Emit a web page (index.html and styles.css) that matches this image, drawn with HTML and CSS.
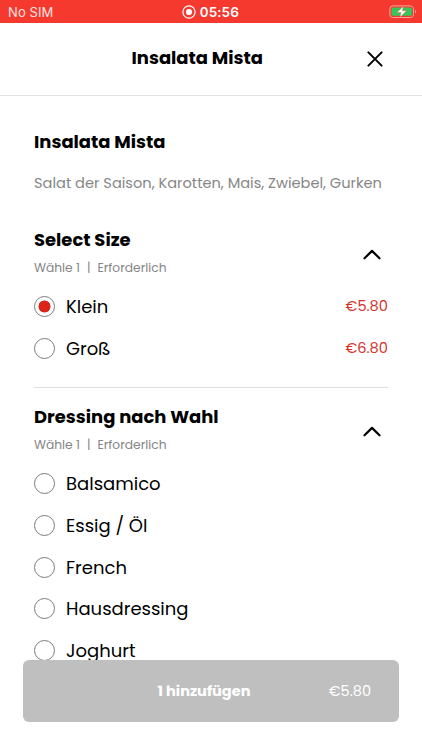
FILE: index.html
```html
<!DOCTYPE html>
<html lang="de">
<head>
<meta charset="utf-8">
<meta name="viewport" content="width=device-width, initial-scale=1">
<title>Insalata Mista</title>
<link rel="stylesheet" href="styles.css">
</head>
<body>
<div class="screen">
  <div class="status">
    <span class="carrier">No SIM</span>
    <span class="clock">
      <svg width="14" height="14" viewBox="0 0 14 14"><circle cx="7" cy="7" r="6.1" fill="none" stroke="#fff" stroke-width="1.2"/><circle cx="7" cy="7" r="3.1" fill="#fff"/></svg>
      <span class="time">05:56</span>
    </span>
    <svg class="battery" width="28" height="14" viewBox="0 0 28 14">
      <rect x=".9" y=".9" width="23.6" height="11.6" rx="3" fill="none" stroke="#fba29b" stroke-width="1"/>
      <rect x="2.6" y="2.6" width="20.2" height="8.2" rx="1.6" fill="#34c759"/>
      <path d="M26 4.8c1.6.6 1.6 3.2 0 3.8z" fill="#fba29b"/>
      <path d="M14.6 1 7.9 7.6h4.1l-1.3 4.9 6.9-6.8h-4.2z" fill="#fff" stroke="#f6392f" stroke-width=".4"/>
    </svg>
  </div>
  <header class="header">
    <h1 class="title header-title">Insalata Mista</h1>
    <svg class="close" width="16" height="16" viewBox="0 0 16 16"><path d="M1.4 1.4 14.6 14.6M14.6 1.4 1.4 14.6" fill="none" stroke="#000" stroke-width="2" stroke-linecap="round"/></svg>
  </header>
  <main class="content">
    <h2 class="title">Insalata Mista</h2>
    <p class="description">Salat der Saison, Karotten, Mais, Zwiebel, Gurken</p>
    <section class="group">
      <div class="group-head">
        <div>
          <h3 class="title">Select Size</h3>
          <p class="hint"><span>Wähle 1</span><span>|</span><span>Erforderlich</span></p>
        </div>
        <svg class="chevron" width="18" height="11" viewBox="0 0 18 11"><path d="M1.5 9.3 9 1.9l7.5 7.4" fill="none" stroke="#000" stroke-width="2.2" stroke-linecap="round" stroke-linejoin="round"/></svg>
      </div>
      <div class="option"><i class="radio checked"></i><span class="name">Klein</span><span class="price">€5.80</span></div>
      <div class="option"><i class="radio"></i><span class="name">Groß</span><span class="price">€6.80</span></div>
    </section>
    <section class="group">
      <div class="group-head">
        <div>
          <h3 class="title">Dressing nach Wahl</h3>
          <p class="hint"><span>Wähle 1</span><span>|</span><span>Erforderlich</span></p>
        </div>
        <svg class="chevron" width="18" height="11" viewBox="0 0 18 11"><path d="M1.5 9.3 9 1.9l7.5 7.4" fill="none" stroke="#000" stroke-width="2.2" stroke-linecap="round" stroke-linejoin="round"/></svg>
      </div>
      <div class="option"><i class="radio"></i><span class="name">Balsamico</span></div>
      <div class="option"><i class="radio"></i><span class="name">Essig / Öl</span></div>
      <div class="option"><i class="radio"></i><span class="name">French</span></div>
      <div class="option"><i class="radio"></i><span class="name">Hausdressing</span></div>
      <div class="option"><i class="radio"></i><span class="name">Joghurt</span></div>
    </section>
  </main>
  <div class="add-bar"><span></span><strong class="add-label">1 hinzufügen</strong><span class="add-price">€5.80</span></div>
</div>
</body>
</html>
```
FILE: styles.css
```css
* { box-sizing: border-box; }
body { margin: 0; background: #fff; }
h1, h2, h3, p { margin: 0; }
svg { display: block; flex: none; }

.screen {
  position: relative;
  height: 750px;
  overflow: hidden;
  font-family: Poppins, Inter, "Open Sans", sans-serif;
  color: #000;
  white-space: nowrap;
}

.status {
  display: grid;
  grid-template-columns: 1fr auto 1fr;
  align-items: center;
  height: 23px;
  padding: 1px 5px 0 8px;
  background: #f6392f;
  color: #fff;
  font-family: Inter, "Liberation Sans", sans-serif;
}
.carrier { font-size: 13px; color: #ffe3e0; letter-spacing: 0.1px; }
.clock { display: flex; align-items: center; gap: 4px; margin-right: 4px; }
.time { font-size: 13.5px; font-weight: 600; letter-spacing: 0.2px; font-feature-settings: "tnum" 1; }
.battery { justify-self: end; }

.header {
  display: grid;
  grid-template-columns: 1fr 104px 1fr;
  align-items: center;
  height: 73px;
  padding: 0 39px 3px 12px;
  border-bottom: 1px solid #e2e2e2;
}
.title { font-size: 17.95px; line-height: 26px; font-weight: 700; }
.header-title { grid-column: 2; margin: 0 -14px; }
.close { justify-self: end; margin-top: 3px; }

.content { padding: 33px 34px 0; }
.description { margin-top: 16px; font-size: 14.6px; line-height: 24px; color: #868686; }

.group { padding-top: 31.5px; }
.group + .group { margin-top: 17.6px; border-top: 1px solid #dedede; padding-top: 16px; }
.group-head { display: flex; justify-content: space-between; align-items: center; padding-right: 7px; margin-bottom: 8.4px; height: 51px; }
.hint { display: flex; gap: 7px; margin-top: 5px; font-size: 12.25px; line-height: 20px; color: #858585; }
.chevron { margin-top: 4px; }

.option { display: flex; align-items: center; height: 41.6px; }
.radio { flex: none; width: 21px; height: 21px; border: 1px solid #7c7c7c; border-radius: 50%; }
.checked { background: radial-gradient(circle, #dc241b 5.7px, transparent 6.3px); }
.name { margin-left: 11px; font-size: 18px; }
.price { margin-left: auto; font-size: 14.6px; color: #d5322b; }

.add-bar {
  position: absolute;
  left: 23px;
  right: 23px;
  top: 660px;
  display: grid;
  grid-template-columns: 1fr auto 1fr;
  align-items: center;
  height: 61.5px;
  padding: 1px 28px 0 14px;
  border-radius: 6px;
  background: #bfbfbf;
  color: #fff;
}
.add-label { font-size: 14.5px; font-weight: 700; }
.add-price { justify-self: end; font-size: 14.5px; }
```
